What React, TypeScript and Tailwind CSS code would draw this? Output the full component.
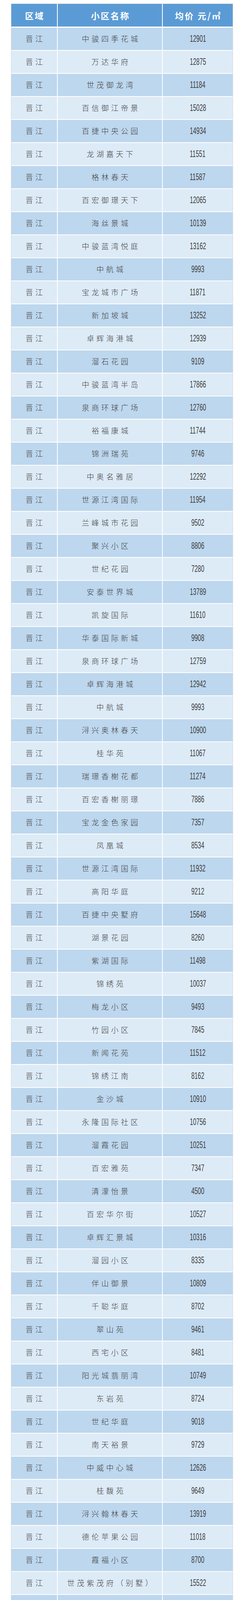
const rows: [string, number][] = [
  ["中骏四季花城", 12901],
  ["万达华府", 12875],
  ["世茂御龙湾", 11184],
  ["百信御江帝景", 15028],
  ["百捷中央公园", 14934],
  ["龙湖嘉天下", 11551],
  ["格林春天", 11587],
  ["百宏御璟天下", 12065],
  ["海丝景城", 10139],
  ["中骏蓝湾悦庭", 13162],
  ["中航城", 9993],
  ["宝龙城市广场", 11871],
  ["新加坡城", 13252],
  ["卓辉海港城", 12939],
  ["溜石花园", 9109],
  ["中骏蓝湾半岛", 17866],
  ["泉商环球广场", 12760],
  ["裕福康城", 11744],
  ["锦洲瑞苑", 9746],
  ["中奥名雅居", 12292],
  ["世源江湾国际", 11954],
  ["兰峰城市花园", 9502],
  ["聚兴小区", 8806],
  ["世纪花园", 7280],
  ["安泰世界城", 13789],
  ["凯旋国际", 11610],
  ["华泰国际新城", 9908],
  ["泉商环球广场", 12759],
  ["卓辉海港城", 12942],
  ["中航城", 9993],
  ["浔兴奥林春天", 10900],
  ["桂华苑", 11067],
  ["瑞璟香榭花都", 11274],
  ["百宏香榭丽璟", 7886],
  ["宝龙金色家园", 7357],
  ["凤凰城", 8534],
  ["世源江湾国际", 11932],
  ["高阳华庭", 9212],
  ["百捷中央墅府", 15648],
  ["湖景花园", 8260],
  ["紫湖国际", 11498],
  ["锦绣苑", 10037],
  ["梅龙小区", 9493],
  ["竹园小区", 7845],
  ["新闻花苑", 11512],
  ["锦绣江南", 8162],
  ["金沙城", 10910],
  ["永隆国际社区", 10756],
  ["溜霞花园", 10251],
  ["百宏雅苑", 7347],
  ["清濛怡景", 4500],
  ["百宏华尔街", 10527],
  ["卓辉汇景城", 10316],
  ["溜园小区", 8335],
  ["伴山御景", 10809],
  ["千聪华庭", 8702],
  ["翠山苑", 9461],
  ["西宅小区", 8481],
  ["阳光城翡丽湾", 10749],
  ["东岩苑", 8724],
  ["世纪华庭", 9018],
  ["南天裕景", 9729],
  ["中威中心城", 12626],
  ["桂馥苑", 9649],
  ["浔兴翰林春天", 13919],
  ["德伦苹果公园", 11018],
  ["霞福小区", 8700],
  ["世茂紫茂府（别墅）", 15522],
  ["仙格小区", 8768],
  ["晋兴御园", 9240],
  ["嘉龙现代城", 8729],
  ["竹苑小区", 9525],
  ["中瑞阳光豪庭", 6539],
  ["御景花园", 8395],
  ["阳光时代广场", 7186],
  ["高霞新天地商贸广场", 6592],
  ["君悦湾", 11459],
  ["中央公寓", 8142],
  ["江夏丽景", 10551],
  ["锦峰小区", 11686],
  ["华泰国际新城八期", 12170],
  ["锦塘雅苑南区", 8059],
  ["明鑫广场", 9475],
  ["城市晶典", 7420],
  ["新城旺角", 7928],
  ["晋江高铁城", 6694],
  ["百捷中央学府", 15070],
  ["双水湾小区", 8453],
  ["福璟花园", 9811],
  ["华洲小区", 10619],
  ["公园壹号", 12649],
  ["福隆花园", 6510],
  ["晋兴国际公寓", 4569],
  ["梅桂园", 10885],
  ["溜溪花园", 8760],
  ["百捷星光城", 14608],
  ["龙安嘉园", 6289],
  ["嘉龙尚都", 8894],
  ["福塘小区", 7473],
  ["中远江滨花园", 7993],
  ["财富广场", 5768],
  ["捷龙盛世", 9356],
  ["金山钻石公寓", 5181],
  ["桂香苑", 9778],
  ["泉州世界贸易中心", 12009],
  ["吴厝福龙花园", 6429],
  ["双龙湾花苑", 8648],
  ["百捷中央领地", 14822],
];

const cjk = "font-['Noto_Sans_CJK_SC','Noto_Sans',sans-serif]";

function HeadCell({ children }: { children: React.ReactNode }) {
  return (
    <div className="flex items-center justify-center bg-[#5b9bd5]">
      <span className="-mr-[3px] inline-block text-[22px] font-bold tracking-[3px] text-white">
        {children}
      </span>
    </div>
  );
}

function Row({ name, price, dark }: { name: string; price: number; dark: boolean }) {
  const bg = dark ? "bg-[#bdd7ee]" : "bg-[#ddebf7]";
  return (
    <div className="grid h-[57px] grid-cols-[117px_267px_179px] gap-x-[2px]">
      <div className={`flex items-center justify-center ${bg}`}>
        <span className="-mr-[6px] inline-block text-[19px] font-light tracking-[6px]">晋江</span>
      </div>
      <div className={`flex items-center justify-center ${bg}`}>
        <span className="-mr-[6px] inline-block whitespace-nowrap text-[19px] font-light tracking-[6px]">
          {name}
        </span>
      </div>
      <div className={`flex items-center justify-center ${bg}`}>
        <span className="inline-block scale-x-[0.65] font-['Liberation_Sans',sans-serif] text-[23px] leading-none">
          {price}
        </span>
      </div>
    </div>
  );
}

export default function App() {
  return (
    <div className={`min-h-[6469px] bg-white pl-[28px] pt-[9px] text-[#3f3f3f] ${cjk}`}>
      <div className="w-[569px] border-x border-t border-[#d9d9d9]">
        {/* header */}
        <div className="mb-[3px] grid h-[58px] grid-cols-[117px_267px_179px] gap-x-[2px]">
          <HeadCell>区域</HeadCell>
          <HeadCell>小区名称</HeadCell>
          <HeadCell>均价 元/㎡</HeadCell>
        </div>

        {/* body */}
        <div className="flex flex-col gap-[2px]">
          {rows.map(([name, price], i) => (
            <Row key={i} name={name} price={price} dark={i % 2 === 0} />
          ))}
        </div>
      </div>
    </div>
  );
}
